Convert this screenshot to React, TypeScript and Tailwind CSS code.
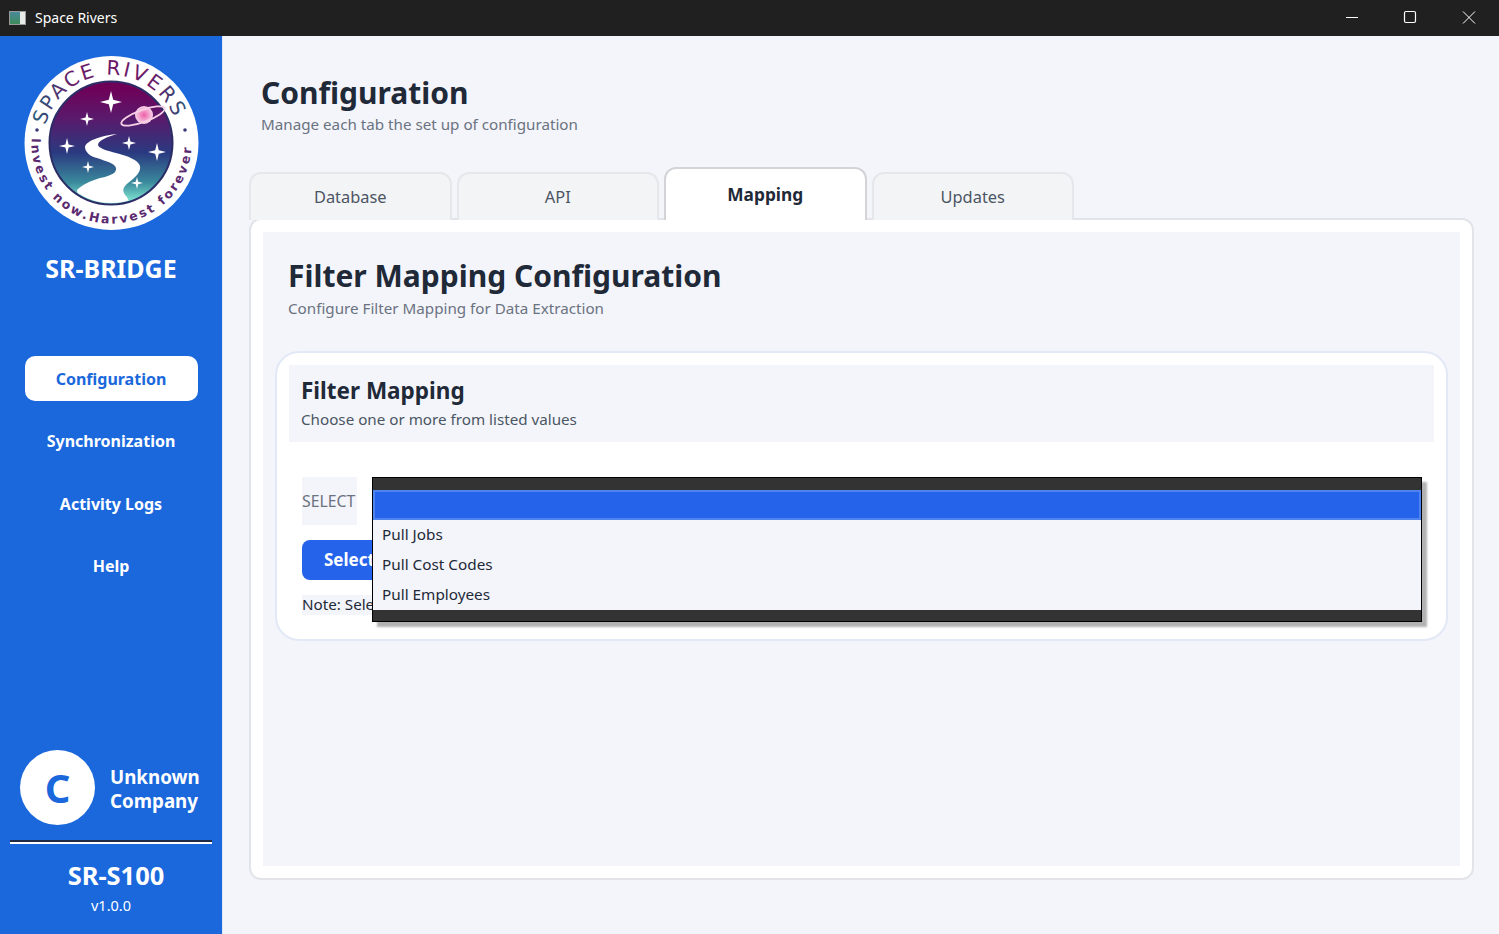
const navItems = ["Configuration", "Synchronization", "Activity Logs", "Help"];
const tabs = ["Database", "API", "Mapping", "Updates"];
const options = ["Pull Jobs", "Pull Cost Codes", "Pull Employees"];

function Star({ x, y, r }: { x: number; y: number; r: number }) {
  const k = r * 0.2;
  return (
    <path
      fill="#fff"
      d={`M${x} ${y - r}L${x + k} ${y - k}L${x + r} ${y}L${x + k} ${y + k}L${x} ${y + r}L${x - k} ${y + k}L${x - r} ${y}L${x - k} ${y - k}Z`}
    />
  );
}

function Logo() {
  return (
    <svg width="185" height="185" viewBox="0 0 185 185">
      <defs>
        <linearGradient id="sky" x1="0" y1="0" x2="0" y2="1">
          <stop offset="0.05" stopColor="#6f0058" />
          <stop offset="0.3" stopColor="#5a1a6c" />
          <stop offset="0.58" stopColor="#2a3a80" />
          <stop offset="0.82" stopColor="#3a8a9c" />
          <stop offset="0.97" stopColor="#7fe3d0" />
        </linearGradient>
        <linearGradient id="topText" gradientUnits="userSpaceOnUse" x1="15" y1="0" x2="170" y2="0">
          <stop offset="0" stopColor="#24597a" />
          <stop offset="0.25" stopColor="#6a1a66" />
          <stop offset="0.75" stopColor="#6a1a66" />
          <stop offset="1" stopColor="#24597a" />
        </linearGradient>
        <radialGradient id="planet">
          <stop offset="0" stopColor="#ee5fa8" />
          <stop offset="1" stopColor="#f7d4e8" />
        </radialGradient>
        <clipPath id="inner">
          <circle cx="91" cy="93" r="60" />
        </clipPath>
        <path id="topArc" d="M25.3 75.4A68 68 0 0 1 156.7 75.4" />
        <path id="bottomArc" d="M11.7 88A80 80 0 1 0 171.3 88" />
      </defs>
      <circle cx="91.5" cy="93" r="87" fill="#fff" />
      <circle cx="91" cy="93" r="61.5" fill="url(#sky)" stroke="#2c2c66" strokeWidth="2" />
      <g clipPath="url(#inner)">
        <path
          fill="#fff"
          d="M97 84C85 85 66 90 65 97C65 103 72 107 77 108C85 111 95 113 96 118C97 124 88 126 80 128C70 131 62 135 57 140L60 165L115 165L107 147C101 141 103 137 108 133C116 127 121 122 120 116C118 110 108 106 96 103C88 101 78 98 78 95C78 91 86 87 97 84Z"
        />
      </g>
      <Star x={91} y={52} r={11} />
      <Star x={67} y={69} r={7} />
      <Star x={47} y={96} r={8} />
      <Star x={109} y={93} r={7} />
      <Star x={137} y={102} r={9} />
      <Star x={68} y={117} r={6} />
      <Star x={117} y={133} r={6} />
      <circle cx="124" cy="65" r="9" fill="url(#planet)" />
      <ellipse cx="123" cy="66" rx="23" ry="6" fill="none" stroke="#f6cfe6" strokeWidth="1.8" transform="rotate(-20 123 66)" />
      <circle cx="17" cy="80" r="1.8" fill="#3d3a78" />
      <circle cx="165" cy="80" r="1.8" fill="#3d3a78" />
      <text fontFamily="'DejaVu Sans', sans-serif" fontSize="20" letterSpacing="2.4" fill="url(#topText)">
        <textPath href="#topArc">SPACE RIVERS</textPath>
      </text>
      <text fontFamily="'DejaVu Sans', sans-serif" fontSize="12.5" fontWeight="700" letterSpacing="2.4" fill="#5a2a70">
        <textPath href="#bottomArc">Invest now.Harvest forever</textPath>
      </text>
    </svg>
  );
}

function TitleBar() {
  return (
    <div className="flex h-9 shrink-0 items-center bg-[#202020] text-white">
      <div className="ml-[9px] flex h-3.5 w-[17px] overflow-hidden border border-[#9a9a9a] bg-[#e8ece8]">
        <div className="w-2.5 bg-gradient-to-b from-[#4a8a9a] to-[#3f8a5a]" />
      </div>
      <span className="ml-[9px] text-sm">Space Rivers</span>
      <div className="ml-auto flex items-center">
        <svg width="58" height="36" viewBox="0 0 58 36" stroke="#fff" fill="none" strokeWidth="1">
          <path d="M22 17.5H34" />
        </svg>
        <svg width="58" height="36" viewBox="0 0 58 36" stroke="#fff" fill="none" strokeWidth="1.2">
          <rect x="22.5" y="11.5" width="11" height="11" rx="1.5" />
        </svg>
        <svg width="59" height="36" viewBox="0 0 59 36" stroke="#fff" fill="none" strokeWidth="1">
          <path d="M23 11.5L35 23.5M35 11.5L23 23.5" />
        </svg>
      </div>
    </div>
  );
}

function Sidebar() {
  return (
    <aside className="flex w-[223px] shrink-0 flex-col border-r border-[#dfe6f5] bg-[#1a68dc] text-white">
      <div className="ml-5 mt-3.5">
        <Logo />
      </div>
      <h2 className="mt-[17px] text-center text-[25px] leading-8 font-bold">SR-BRIDGE</h2>
      <nav className="mt-[72px] flex flex-col items-center">
        {navItems.map((item, i) => (
          <a
            key={item}
            className={`flex h-[45px] w-[173px] items-center justify-center rounded-[10px] text-[16px] font-bold ${
              i === 0 ? "bg-white text-[#1a68dc]" : ""
            } ${i > 0 ? "mt-[17.5px]" : ""}`}
          >
            {item}
          </a>
        ))}
      </nav>
      <div className="mt-auto">
        <div className="ml-5 flex items-center gap-[15px]">
          <div className="flex size-[75px] items-center justify-center rounded-full bg-white text-[40px] font-bold text-[#1a68dc]">
            C
          </div>
          <div className="pt-[2px] text-[18.75px] leading-6 font-bold">
            Unknown
            <br />
            Company
          </div>
        </div>
        <div className="mx-2.5 mt-[15px] border-t-2 border-b-2 border-t-[#1f2a44] border-b-white" />
        <div className="mt-[15px] ml-[10px] text-center text-[25.5px] leading-8 font-bold">SR-S100</div>
        <div className="mt-1 mb-[19px] text-center text-[14.5px] leading-5">v1.0.0</div>
      </div>
    </aside>
  );
}

function Tabs() {
  return (
    <div className="relative z-10 ml-[26px] mt-[31px] flex h-[53px] items-end gap-[5px]">
      {tabs.map((tab) =>
        tab === "Mapping" ? (
          <div
            key={tab}
            className="-mb-[2px] flex h-[53px] w-[202.5px] justify-center rounded-t-xl border-2 border-b-0 border-[#d4d4d8] bg-white pt-[12px] text-[17.3px] leading-7 font-bold text-[#1f2937]"
          >
            {tab}
          </div>
        ) : (
          <div
            key={tab}
            className="-mb-[2px] flex h-12 w-[202.5px] justify-center rounded-t-xl border-2 border-b-0 border-[#e5e7eb] bg-[#f3f4f6] pt-[9px] text-[16.4px] leading-7 text-[#4b5563]"
          >
            {tab}
          </div>
        ),
      )}
    </div>
  );
}

function FilterCard() {
  return (
    <div className="relative mt-[31px] ml-3 mr-3 h-[290px] rounded-3xl border-2 border-[#e2e8f5] bg-white p-3">
      <div className="h-[77px] bg-[#f3f5fb] px-3 pt-[10px]">
        <h3 className="text-[22.5px] leading-8 font-bold text-[#1f2937]">Filter Mapping</h3>
        <p className="text-[15.2px] leading-6 text-[#4b5563]">Choose one or more from listed values</p>
      </div>
      <div className="ml-[13px] mt-[35px] flex h-12 w-[55px] items-center bg-[#f3f5fb] pt-[2px] text-[15.8px] whitespace-nowrap text-[#6b7280]">
        SELECT
      </div>
      <button className="mt-[15px] ml-[13px] block h-10 rounded-lg bg-[#2563eb] px-[22px] text-[17px] font-bold text-white">
        Select Filters
      </button>
      <div className="ml-[13px] mt-[15px] w-fit bg-[#f3f5fb] pb-[2px] text-[15.2px] leading-[18px] text-[#1f2937]">
        Note: Select one or more filters
      </div>
      <div className="absolute left-[95px] top-[124px] w-[1050px] border border-black bg-[#333] pt-3 pb-[11px] shadow-[5px_5px_2px_rgba(0,0,0,0.3)]">
        <div className="h-[30px] border-2 border-[#4f83ee] bg-[#2563eb]" />
        <ul className="bg-[#f3f5fb]">
          {options.map((option) => (
            <li key={option} className="flex h-[30px] items-center pb-[2px] pl-[9px] text-[15.3px] text-[#1f2937]">
              {option}
            </li>
          ))}
        </ul>
      </div>
    </div>
  );
}

export default function App() {
  return (
    <div className="flex h-[934px] w-[1499px] flex-col overflow-hidden bg-[#f3f5fb] font-['Noto_Sans',sans-serif]">
      <TitleBar />
      <div className="flex min-h-0 flex-1">
        <Sidebar />
        <main className="min-w-0 flex-1">
          <div className="ml-[38px] mt-[39px]">
            <h1 className="text-3xl leading-9 font-bold text-[#1f2937]">Configuration</h1>
            <p className="mt-[3px] text-[15.2px] leading-5 text-[#6b7280]">Manage each tab the set up of configuration</p>
          </div>
          <Tabs />
          <div className="ml-[26px] mr-[25px] h-[662px] rounded-xl border-2 border-[#e2e4ea] bg-white p-3">
            <div className="h-[634px] bg-[#f3f5fb] pt-[26px]">
              <div className="ml-[25px]">
                <h2 className="text-3xl leading-9 font-bold text-[#1f2937]">Filter Mapping Configuration</h2>
                <p className="mt-[2px] text-[15.2px] leading-6 text-[#6b7280]">Configure Filter Mapping for Data Extraction</p>
              </div>
              <FilterCard />
            </div>
          </div>
        </main>
      </div>
    </div>
  );
}
